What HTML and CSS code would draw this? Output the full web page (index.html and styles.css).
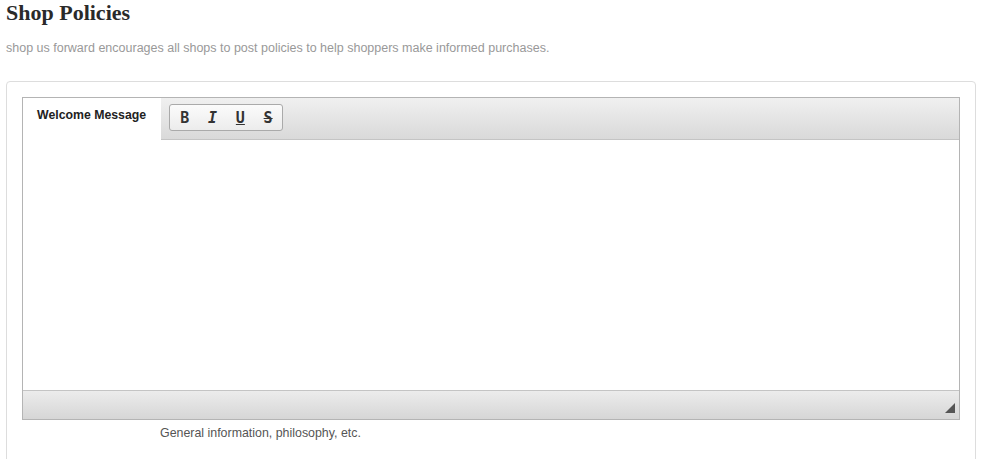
FILE: index.html
```html
<!DOCTYPE html>
<html>
<head>
<meta charset="utf-8">
<link rel="stylesheet" href="styles.css">
</head>
<body>
<div class="page">
  <h1 class="title">Shop Policies</h1>
  <p class="lead">shop us forward encourages all shops to post policies to help shoppers make informed purchases.</p>
  <div class="card">
    <div class="editor">
      <div class="editor-top">
        <div class="label">Welcome Message</div>
        <div class="toolbar">
          <div class="btn-group">
            <span class="btn b">B</span>
            <span class="btn i">I</span>
            <span class="btn u">U</span>
            <span class="btn s">S</span>
          </div>
        </div>
      </div>
      <div class="content"></div>
      <div class="status"><span class="grip"></span></div>
    </div>
    <div class="help">General information, philosophy, etc.</div>
  </div>
</div>
</body>
</html>
```

FILE: styles.css
```css
html, body { margin: 0; padding: 0; background: #fff; }
.page { padding: 0 6px; font-family: "Liberation Sans", Arial, sans-serif; }
.title {
  font-family: "Liberation Serif", "Times New Roman", serif;
  font-size: 22px; font-weight: bold; color: #2a2a2a;
  margin: 0; padding-top: 0; line-height: 25px;
}
.lead { margin: 14px 0 0; font-size: 12.5px; color: #999; line-height: 18px; }
.card {
  margin-top: 24px; width: 938px;
  border: 1px solid #ddd; border-radius: 4px;
  padding: 15px 15px 20px;
  height: 380px;
}
.editor { border: 1px solid #b4b4b4; background: #fff; }
.editor-top { display: flex; height: 42px; }
.label {
  width: 138px; font-size: 12.3px; font-weight: bold; color: #222;
  padding: 10px 0 0 14px; box-sizing: border-box;
}
.toolbar {
  flex: 1; background: linear-gradient(#f0f0f0, #d9d9d9);
  border-bottom: 1px solid #c4c4c4; padding: 6px 0 0 8px;
}
.btn-group {
  display: inline-flex; border: 1px solid #aaa; border-radius: 3px;
  background: linear-gradient(#fbfbfb, #ececec); height: 25px; padding: 0 0 0 1px;
  align-items: center; width: 111px; box-sizing: content-box;
}
.btn {
  width: 28px; text-align: center; font-size: 15px; font-weight: bold; color: #333;
  font-family: "DejaVu Sans Mono", monospace;
}
.btn.i { font-style: italic; }
.btn.u { text-decoration: underline; }
.btn.s { text-decoration: line-through; }
.content { height: 250px; }
.status {
  height: 28px; border-top: 1px solid #c4c4c4;
  background: linear-gradient(#ececec, #d6d6d6); position: relative;
}
.grip {
  position: absolute; right: 4px; bottom: 6px; width: 0; height: 0;
  border-left: 10px solid transparent; border-bottom: 10px solid #555;
}
.help { margin: 4px 0 0 138px; font-size: 12.4px; color: #555; line-height: 18px; }
```
